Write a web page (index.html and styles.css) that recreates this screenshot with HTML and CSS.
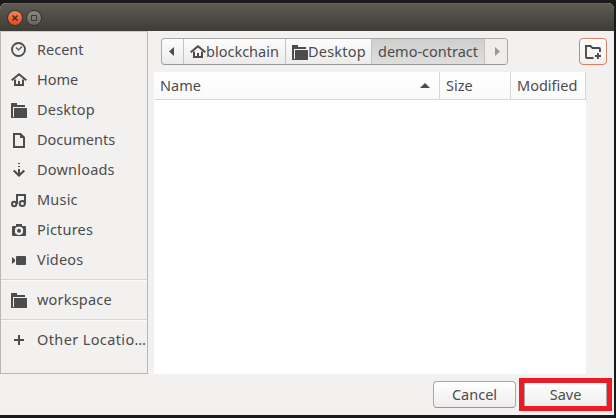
FILE: index.html
```html
<!DOCTYPE html>
<html lang="en">
<head>
<meta charset="utf-8">
<title>Save</title>
<link rel="stylesheet" href="styles.css">
</head>
<body>
<svg class="defs" width="0" height="0">
  <symbol id="home" viewBox="0 0 16 16"><path d="M.7 8.300 8 2.300l7.300 6" fill="none" stroke="currentColor" stroke-width="2"/><path d="M3 7.500h2V12h2V9h2v3h2V7.500h2V14H3z"/></symbol>
  <symbol id="folder" viewBox="0 0 16 16"><path d="M0 1h6v2h8v2H2v11H0z"/><path d="M3 6h13v10H2V15h1z"/></symbol>
</svg>
<div class="window">
  <header class="titlebar">
    <span class="control close"><svg width="14" height="14" viewBox="0 0 14 14"><path d="m4.500 4.500 5 5m0-5-5 5" stroke="#51291c" stroke-width="1.500"/></svg></span>
    <span class="control max"><svg width="14" height="14" viewBox="0 0 14 14"><path d="M4.500 4.500h5v5h-5z" fill="none" stroke="#3b3a35"/></svg></span>
  </header>
  <main class="body">
    <nav class="sidebar">
      <a class="place"><svg class="icon" viewBox="0 0 16 16"><circle cx="7.500" cy="7.500" r="6.500" fill="none" stroke="currentColor" stroke-width="1.800"/><path d="m5 5.500 2.500 2.500L11 4.500" fill="none" stroke="currentColor" stroke-width="1.100"/></svg><span>Recent</span></a>
      <a class="place"><svg class="icon"><use href="#home"/></svg><span>Home</span></a>
      <a class="place"><svg class="icon"><use href="#folder"/></svg><span class="wide">Desktop</span></a>
      <a class="place"><svg class="icon" viewBox="0 0 16 16"><path d="M3 2h6.500L13 5.500V15H3z" fill="none" stroke="currentColor" stroke-width="2"/><path d="M9 2v4h4z"/></svg><span>Documents</span></a>
      <a class="place"><svg class="icon" viewBox="0 0 16 16"><path d="M7 1h2v1H7zM7 4h2v1H7zM7 7h2v6H7z"/><path d="m2.700 8.500 5.300 5 5.300-5" fill="none" stroke="currentColor" stroke-width="2.200"/></svg><span class="wide">Downloads</span></a>
      <a class="place"><svg class="icon" viewBox="0 0 16 16"><g fill="none" stroke="currentColor" stroke-width="2"><circle cx="3.200" cy="12" r="2.200"/><circle cx="11.300" cy="11.500" r="2.600"/><path d="M6 12V3h8v8.500"/></g></svg><span class="wide">Music</span></a>
      <a class="place"><svg class="icon" viewBox="0 0 16 16"><path fill-rule="evenodd" d="M5 2h6v2h3q1 0 1 1v8q0 1-1 1H2q-1 0-1-1V5q0-1 1-1h3zM8 4.700a4.100 4.100 0 1 0 0 8.200 4.100 4.100 0 0 0 0-8.200z"/><circle cx="8" cy="8.800" r="3.200" fill="#f2f1f0"/><path fill-rule="evenodd" d="M8 4.700a4.100 4.100 0 1 0 0 8.200 4.100 4.100 0 0 0 0-8.200zm0 1a3.100 3.100 0 1 1 0 6.200 3.100 3.100 0 0 1 0-6.200z" fill="#f2f1f0"/><circle cx="8" cy="8.800" r="2"/></svg><span class="wide">Pictures</span></a>
      <a class="place"><svg class="icon" viewBox="0 0 16 16"><path d="M1 5v7l3-2.500v-2z"/><rect x="5" y="4" width="10" height="9" rx="1"/></svg><span class="wide">Videos</span></a>
      <hr>
      <a class="place"><svg class="icon"><use href="#folder"/></svg><span class="wide">workspace</span></a>
      <hr>
      <a class="place"><svg class="icon" viewBox="0 0 16 16"><path d="M7 3h2v4h4v2H9v4H7V9H3V7h4z"/></svg><span class="other">Other Locatio…</span></a>
    </nav>
    <section class="content">
      <div class="toolbar">
        <div class="pathbar">
          <span class="seg back"><svg width="5" height="9" viewBox="0 0 5 9"><path d="M5 0v9L0 4.500z"/></svg></span>
          <span class="seg chain"><svg class="icon"><use href="#home"/></svg><span>blockchain</span></span>
          <span class="seg desk"><svg class="icon"><use href="#folder"/></svg><span class="wide">Desktop</span></span>
          <span class="seg active"><span>demo-contract</span></span>
          <span class="seg forward"><svg width="5" height="9" viewBox="0 0 5 9"><path d="M0 0v9l5-4.500z"/></svg></span>
        </div>
        <button class="newfolder"><svg width="18" height="16" viewBox="0 0 18 16"><path d="M9.500 14H3q-1 0-1-1V2h4.500l2 2H15q1 0 1 1v3M14 9v6M11 12h6" fill="none" stroke="currentColor" stroke-width="1.900"/></svg></button>
      </div>
      <div class="list">
        <div class="columns">
          <span class="col name"><span>Name</span><svg width="10" height="5" viewBox="0 0 10 5"><path d="M0 5 5 0l5 5z"/></svg></span>
          <span class="col size"><span>Size</span></span>
          <span class="col modified"><span>Modified</span></span>
        </div>
      </div>
    </section>
  </main>
  <footer class="actions">
    <button class="button"><span>Cancel</span></button>
    <div class="highlight"><button class="button save"><span>Save</span></button></div>
  </footer>
</div>
</body>
</html>
```
FILE: styles.css
```css
* { box-sizing: border-box; }
body {
  margin: 0;
  height: 418px;
  padding: 3px 2px 3px 0;
  overflow: hidden;
  background: #1b1a1a;
  color: #4c4c4c;
  font: 14.5px/20px "Noto Sans", sans-serif;
}
.defs { position: absolute; }
svg { fill: currentColor; flex: none; display: block; }
.icon { width: 16px; height: 16px; }
.window { height: 412px; background: #f2f1f0; border-radius: 6px 6px 0 0; overflow: hidden; }
.titlebar {
  height: 28px;
  display: flex;
  align-items: center;
  gap: 3px;
  padding-left: 7px;
  background: linear-gradient(#5d5a50, #3d3c37);
  border-top: 1px solid #69665b;
}
.control { width: 16px; height: 16px; border-radius: 50%; border: 1px solid #34332e; display: grid; place-items: center; }
.close { background: linear-gradient(#f58461, #df4c1b); }
.max { background: linear-gradient(#8b8982, #66645d); }
.body { display: flex; height: 343px; }
.sidebar { width: 148px; border: 1px solid #bab7b2; border-top-color: #d0cecb; padding-top: 3px; overflow: hidden; }
.place { display: flex; align-items: center; height: 30px; padding-left: 10px; gap: 10px; white-space: nowrap; }
.place span, .seg span, .col span, .button span { display: block; padding-bottom: 2px; }
.wide { letter-spacing: .2px; }
.other { letter-spacing: .38px; }
hr { height: 2px; margin: 4px 0; border: 0; border-top: 1px solid #d6d4d2; background: #fcfcfb; }
.content { flex: 1; padding-left: 6px; }
.toolbar { display: flex; justify-content: space-between; height: 41px; padding: 7px 7px 7px; }
.pathbar {
  display: flex;
  width: 347px;
  height: 27px;
  border: 1px solid #aaa8a5;
  border-bottom-color: #999794;
  border-radius: 4px;
  background: linear-gradient(#fdfdfd, #edebea);
  overflow: hidden;
}
.seg { display: flex; align-items: center; border-right: 1px solid #c5c3c1; white-space: nowrap; }
.back { width: 22px; padding-left: 7px; }
.chain { width: 102px; padding-left: 6px; }
.desk { width: 86px; padding-left: 6px; }
.active { width: 113px; padding-left: 6px; background: linear-gradient(#cfcfcf, #dfdedd); }
.forward { flex: 1; padding-left: 10px; border: 0; background: #efedec; color: #99978f; }
.newfolder {
  width: 28px;
  height: 27px;
  padding: 0;
  display: grid;
  place-items: center;
  border: 1px solid #dc8063;
  border-radius: 4px;
  background: linear-gradient(#fff, #f1efee);
  color: #4c4c4c;
}
.list { width: 432px; height: 302px; background: #fff; }
.columns { display: flex; height: 28px; border-bottom: 1px solid #d8d7d6; background: linear-gradient(#fff, #fafafa); }
.col { display: flex; align-items: center; padding-left: 6px; border-right: 1px solid #d8d7d6; }
.name { width: 286px; justify-content: space-between; padding-right: 9px; }
.size { width: 71px; }
.modified { width: 75px; }
.actions { display: flex; justify-content: flex-end; gap: 3px; padding: 4px 2px 0 0; }
.button {
  width: 83px;
  height: 27px;
  margin-top: 3px;
  padding: 0;
  border: 1px solid #aaa8a5;
  border-bottom-color: #999794;
  border-radius: 4px;
  background: linear-gradient(#fff, #efedec);
  color: inherit;
  font: inherit;
}
.highlight { width: 93px; height: 33px; border: 5px solid #ed1c24; overflow: hidden; }
.save { display: block; height: 27px; margin-top: -2px; }
```
